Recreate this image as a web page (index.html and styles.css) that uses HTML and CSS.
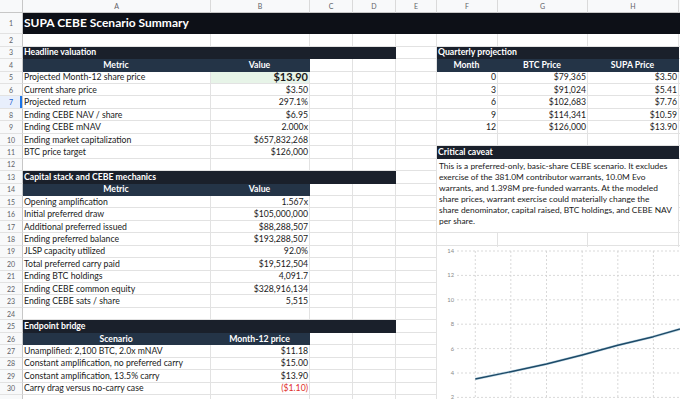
FILE: index.html
```html
<!DOCTYPE html>
<html lang="en">
<head>
<meta charset="utf-8">
<title>SUPA CEBE Scenario Summary</title>
<link rel="stylesheet" href="styles.css">
</head>
<body>
<div class="sheet">
  <table class="grid">
    <colgroup>
      <col class="c-rn"><col class="c-a"><col class="c-b"><col class="c-c"><col class="c-d"><col class="c-e"><col class="c-f"><col class="c-g"><col class="c-h"><col class="c-i">
    </colgroup>
    <thead>
      <tr class="hdr">
        <th class="corner"></th><th>A</th><th>B</th><th>C</th><th>D</th><th>E</th><th>F</th><th>G</th><th>H</th><th></th>
      </tr>
    </thead>
    <tbody>
      <tr class="r-title"><td class="rn">1</td><td class="title" colspan="9">SUPA CEBE Scenario Summary</td></tr>
      <tr class="r"><td class="rn">2</td><td></td><td></td><td></td><td></td><td></td><td></td><td></td><td></td><td></td></tr>
      <tr class="r"><td class="rn">3</td><td class="sec" colspan="4">Headline valuation</td><td></td><td class="sec" colspan="3">Quarterly projection</td><td></td></tr>
      <tr class="r"><td class="rn">4</td><td class="th">Metric</td><td class="th">Value</td><td></td><td></td><td></td><td class="th">Month</td><td class="th">BTC Price</td><td class="th">SUPA Price</td><td></td></tr>
      <tr class="r"><td class="rn">5</td><td>Projected Month-12 share price</td><td class="num hl">$13.90</td><td></td><td></td><td></td><td class="num">0</td><td class="num">$79,365</td><td class="num">$3.50</td><td></td></tr>
      <tr class="r"><td class="rn">6</td><td>Current share price</td><td class="num">$3.50</td><td></td><td></td><td></td><td class="num">3</td><td class="num">$91,024</td><td class="num">$5.41</td><td></td></tr>
      <tr class="r"><td class="rn active">7</td><td>Projected return</td><td class="num">297.1%</td><td></td><td></td><td></td><td class="num">6</td><td class="num">$102,683</td><td class="num">$7.76</td><td></td></tr>
      <tr class="r"><td class="rn">8</td><td>Ending CEBE NAV / share</td><td class="num">$6.95</td><td></td><td></td><td></td><td class="num">9</td><td class="num">$114,341</td><td class="num">$10.59</td><td></td></tr>
      <tr class="r"><td class="rn">9</td><td>Ending CEBE mNAV</td><td class="num">2.000x</td><td></td><td></td><td></td><td class="num">12</td><td class="num">$126,000</td><td class="num">$13.90</td><td></td></tr>
      <tr class="r"><td class="rn">10</td><td>Ending market capitalization</td><td class="num">$657,832,268</td><td></td><td></td><td></td><td></td><td></td><td></td><td></td></tr>
      <tr class="r"><td class="rn">11</td><td>BTC price target</td><td class="num">$126,000</td><td></td><td></td><td></td><td class="sec" colspan="3">Critical caveat</td><td></td></tr>
      <tr class="r"><td class="rn">12</td><td></td><td></td><td></td><td></td><td></td><td class="note" colspan="3" rowspan="6">This is a preferred-only, basic-share CEBE scenario. It excludes<br>exercise of the 381.0M contributor warrants, 10.0M Evo<br>warrants, and 1.398M pre-funded warrants. At the modeled<br>share prices, warrant exercise could materially change the<br>share denominator, capital raised, BTC holdings, and CEBE NAV<br>per share.</td><td></td></tr>
      <tr class="r"><td class="rn">13</td><td class="sec" colspan="4">Capital stack and CEBE mechanics</td><td></td><td></td></tr>
      <tr class="r"><td class="rn">14</td><td class="th">Metric</td><td class="th">Value</td><td></td><td></td><td></td><td></td></tr>
      <tr class="r"><td class="rn">15</td><td>Opening amplification</td><td class="num">1.567x</td><td></td><td></td><td></td><td></td></tr>
      <tr class="r"><td class="rn">16</td><td>Initial preferred draw</td><td class="num">$105,000,000</td><td></td><td></td><td></td><td></td></tr>
      <tr class="r"><td class="rn">17</td><td>Additional preferred issued</td><td class="num">$88,288,507</td><td></td><td></td><td></td><td></td></tr>
      <tr class="r"><td class="rn">18</td><td>Ending preferred balance</td><td class="num">$193,288,507</td><td></td><td></td><td></td><td></td><td></td><td></td><td></td></tr>
      <tr class="r"><td class="rn">19</td><td>JLSP capacity utilized</td><td class="num">92.0%</td><td></td><td></td><td></td><td></td><td></td><td></td><td></td></tr>
      <tr class="r"><td class="rn">20</td><td>Total preferred carry paid</td><td class="num">$19,512,504</td><td></td><td></td><td></td><td></td><td></td><td></td><td></td></tr>
      <tr class="r"><td class="rn">21</td><td>Ending BTC holdings</td><td class="num">4,091.7</td><td></td><td></td><td></td><td></td><td></td><td></td><td></td></tr>
      <tr class="r"><td class="rn">22</td><td>Ending CEBE common equity</td><td class="num">$328,916,134</td><td></td><td></td><td></td><td></td><td></td><td></td><td></td></tr>
      <tr class="r"><td class="rn">23</td><td>Ending CEBE sats / share</td><td class="num">5,515</td><td></td><td></td><td></td><td></td><td></td><td></td><td></td></tr>
      <tr class="r"><td class="rn">24</td><td></td><td></td><td></td><td></td><td></td><td></td><td></td><td></td><td></td></tr>
      <tr class="r"><td class="rn">25</td><td class="sec" colspan="4">Endpoint bridge</td><td></td><td></td><td></td><td></td><td></td></tr>
      <tr class="r"><td class="rn">26</td><td class="th">Scenario</td><td class="th">Month-12 price</td><td></td><td></td><td></td><td></td><td></td><td></td><td></td></tr>
      <tr class="r"><td class="rn">27</td><td>Unamplified: 2,100 BTC, 2.0x mNAV</td><td class="num">$11.18</td><td></td><td></td><td></td><td></td><td></td><td></td><td></td></tr>
      <tr class="r"><td class="rn">28</td><td>Constant amplification, no preferred carry</td><td class="num">$15.00</td><td></td><td></td><td></td><td></td><td></td><td></td><td></td></tr>
      <tr class="r"><td class="rn">29</td><td>Constant amplification, 13.5% carry</td><td class="num">$13.90</td><td></td><td></td><td></td><td></td><td></td><td></td><td></td></tr>
      <tr class="r"><td class="rn">30</td><td>Carry drag versus no-carry case</td><td class="num neg">($1.10)</td><td></td><td></td><td></td><td></td><td></td><td></td><td></td></tr>
      <tr class="r"><td class="rn"></td><td></td><td></td><td></td><td></td><td></td><td></td><td></td><td></td><td></td></tr>
    </tbody>
  </table>

  <div class="chart">
    <svg width="250" height="160" viewBox="0 0 250 160">
      <g class="hgrid">
        <line x1="20" y1="4" x2="250" y2="4"/>
        <line x1="20" y1="28.4" x2="250" y2="28.4"/>
        <line x1="20" y1="52.8" x2="250" y2="52.8"/>
        <line x1="20" y1="77.2" x2="250" y2="77.2"/>
        <line x1="20" y1="101.6" x2="250" y2="101.6"/>
        <line x1="20" y1="126" x2="250" y2="126"/>
        <line x1="20" y1="150.4" x2="250" y2="150.4"/>
      </g>
      <g class="vgrid">
        <line x1="38.3" y1="4" x2="38.3" y2="160"/>
        <line x1="73.8" y1="4" x2="73.8" y2="160"/>
        <line x1="109.5" y1="4" x2="109.5" y2="160"/>
        <line x1="145.2" y1="4" x2="145.2" y2="160"/>
        <line x1="180.8" y1="4" x2="180.8" y2="160"/>
        <line x1="216.4" y1="4" x2="216.4" y2="160"/>
      </g>
      <g class="ylab">
        <text x="17" y="6">14</text>
        <text x="17" y="30.4">12</text>
        <text x="17" y="54.8">10</text>
        <text x="17" y="79.2">8</text>
        <text x="17" y="103.6">6</text>
        <text x="17" y="128">4</text>
        <text x="17" y="152.4">2</text>
      </g>
      <polyline class="series-halo" points="38.3,132 73.8,124.7 109.5,117 145.2,108 180.8,98.3 216.4,89.7 252,79.5"/>
      <polyline class="series" points="38.3,132 73.8,124.7 109.5,117 145.2,108 180.8,98.3 216.4,89.7 252,79.5"/>
    </svg>
  </div>
</div>
</body>
</html>
```

FILE: styles.css
```css
html, body {
  margin: 0;
  padding: 0;
  background: #ffffff;
  overflow: hidden;
}

body {
  width: 680px;
  height: 399px;
  font-family: Lato, "Liberation Sans", sans-serif;
  font-size: 8.7px;
  color: #1a1a1a;
}

.sheet {
  position: relative;
  width: 680px;
  height: 399px;
  overflow: hidden;
}

.grid {
  border-collapse: separate;
  border-spacing: 0;
  table-layout: fixed;
  width: 772px;
}

.c-rn { width: 23px; }
.c-a { width: 188px; }
.c-b { width: 99px; }
.c-c { width: 43px; }
.c-d { width: 43px; }
.c-e { width: 41px; }
.c-f { width: 61px; }
.c-g { width: 90px; }
.c-h { width: 91px; }
.c-i { width: 93px; }

.grid td,
.grid th {
  box-sizing: border-box;
  padding: 0 2px 0 1px;
  border-right: 1px solid #e2e2e2;
  border-bottom: 1px solid #e2e2e2;
  white-space: nowrap;
  overflow: hidden;
  line-height: 10px;
  vertical-align: middle;
  text-align: left;
  font-weight: 400;
}

.hdr { height: 12.5px; }
.hdr th {
  background: #f8f9fa;
  color: #5f6368;
  font-size: 7px;
  text-align: center;
  border-bottom-color: #c7c7c7;
  border-right-color: #dadada;
  padding: 0;
}
.hdr th.corner { border-right-color: #c7c7c7; }

.r-title { height: 21.8px; }
.r { height: 12.44px; }

.grid td.rn {
  background: #f8f9fa;
  color: #5f6368;
  font-size: 7px;
  text-align: center;
  padding: 0;
  border-right-color: #c7c7c7;
}
.grid td.rn.active {
  color: #1a5fd0;
  background: #e8effc;
  box-shadow: inset -2px 0 0 #1a73e8;
}

.grid td.title {
  background: #0d1017;
  border-color: #0d1017;
  color: #ffffff;
  font-weight: 700;
  font-size: 12px;
  line-height: 14px;
}

.grid td.sec {
  background: #1a202b;
  border-color: #1a202b;
  color: #ffffff;
  font-weight: 700;
}

.grid td.th {
  background: #243447;
  border-color: #243447;
  color: #ffffff;
  font-weight: 700;
  text-align: center;
}

.grid td.num { text-align: right; padding-right: 1px; }

.grid td.hl {
  background: #e7f4e8;
  font-weight: 700;
  font-size: 11px;
}

.grid td.neg { color: #e0312b; }

.grid td.note {
  vertical-align: top;
  padding: 2px 2px 0 2px;
  font-size: 8.4px;
  line-height: 11px;
  white-space: nowrap;
}

.chart {
  position: absolute;
  left: 437px;
  top: 247px;
  width: 250px;
  height: 160px;
  background: #ffffff;
}

.chart svg { display: block; }

.hgrid line,
.vgrid line {
  stroke: #cfcfcf;
  stroke-width: 0.8;
  stroke-dasharray: 2 2;
}

.ylab text {
  font-family: Lato, "Liberation Sans", sans-serif;
  font-size: 5.8px;
  fill: #8a8a8a;
  text-anchor: end;
}

.series-halo {
  fill: none;
  stroke: #9fc3d6;
  stroke-width: 2.6;
  stroke-linejoin: round;
  opacity: 0.6;
}

.series {
  fill: none;
  stroke: #1d4a68;
  stroke-width: 1.4;
  stroke-linejoin: round;
}
```
